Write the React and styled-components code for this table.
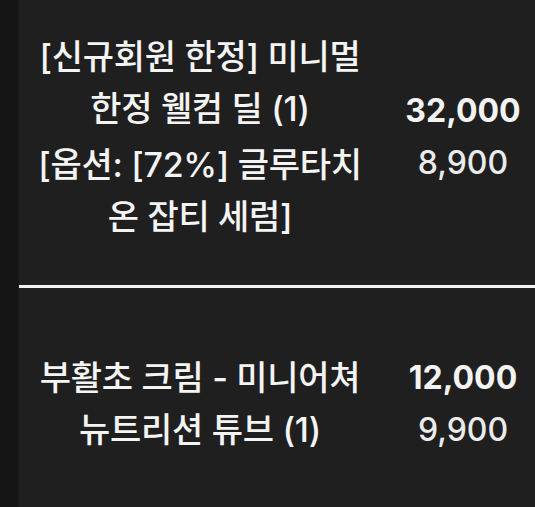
import styled, { createGlobalStyle } from "styled-components";

// Global page styles

const GlobalStyle = createGlobalStyle`
    html, body {
        margin: 0;
        padding: 0;
        background-color: #1f1f1f;
    }
    body {
        font-family: Inter, "Noto Sans CJK KR", sans-serif;
        -webkit-font-smoothing: antialiased;
    }
`;

// Styled components

const Page = styled.div`
    display: flex;
    min-height: 100vh;
`;

const SideStrip = styled.div`
    width: 18px;
    flex-shrink: 0;
    background-color: #151515;
    border-right: 1px solid #1a1a1a;
`;

const OrderList = styled.div`
    flex: 1;
    display: flex;
    flex-direction: column;
`;

const OrderItem = styled.div`
    display: grid;
    grid-template-columns: 362px 1fr;
    align-items: center;
    padding: ${(props) => props.$top}px 0 ${(props) => props.$bottom}px;
`;

const ItemInfo = styled.div`
    padding: 0 11px;
    display: flex;
    flex-direction: column;
    gap: 4px;
    text-align: center;
    color: #f4f4f4;
    font-size: 34px;
    font-weight: 500;
    line-height: 52px;
    letter-spacing: -0.3px;
`;

const PriceColumn = styled.div`
    padding-left: 10px;
    display: flex;
    flex-direction: column;
    align-items: center;
    font-size: 32px;
    line-height: 52px;
`;

const Price = styled.span`
    font-weight: ${(props) => (props.$main ? 700 : 450)};
    color: ${(props) => (props.$main ? "#f3f3f3" : "#ebebeb")};
`;

const Divider = styled.hr`
    margin: 0;
    border: none;
    height: 3px;
    background-color: #f2f2f2;
`;

const items = [
    {
        name: "[신규회원 한정] 미니멀 한정 웰컴 딜 (1)",
        option: "[옵션: [72%] 글루타치온 잡티 세럼]",
        price: "32,000",
        optionPrice: "8,900",
        top: 31,
        bottom: 42,
    },
    {
        name: "부활초 크림 - 미니어쳐 뉴트리션 튜브 (1)",
        option: null,
        price: "12,000",
        optionPrice: "9,900",
        top: 64,
        bottom: 40,
    },
];

function App() {
    return (
        <Page>
            <GlobalStyle />
            <SideStrip />
            <OrderList>
                {items.map((item, i) => (
                    <div key={i}>
                        {i > 0 && <Divider />}
                        <OrderItem $top={item.top} $bottom={item.bottom}>
                            <ItemInfo>
                                <span>{item.name}</span>
                                {item.option && <span>{item.option}</span>}
                            </ItemInfo>
                            <PriceColumn>
                                <Price $main>{item.price}</Price>
                                <Price>{item.optionPrice}</Price>
                            </PriceColumn>
                        </OrderItem>
                    </div>
                ))}
            </OrderList>
        </Page>
    );
}

export default App;
